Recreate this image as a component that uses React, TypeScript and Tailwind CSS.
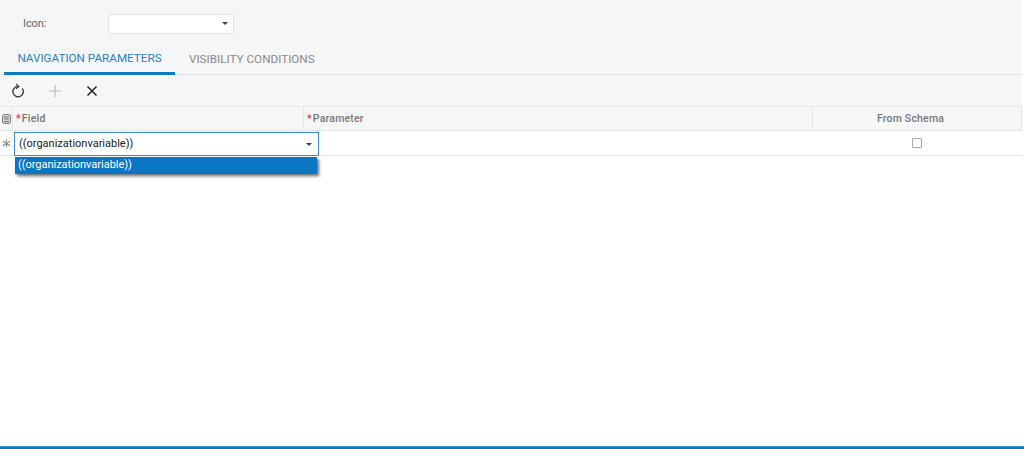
import React from "react";

function Caret() {
  return <span className="w-0 h-0 border-x-[3.5px] border-x-transparent border-t-[3.5px] border-t-[#444]" />;
}

export default function App() {
  return (
    <div className="relative w-[1024px] h-[449px] overflow-hidden bg-white flex flex-col font-['Roboto',sans-serif] text-[11px]">
      <div className="bg-[#f5f6f8] h-[75px] flex flex-col shrink-0 mr-[2px]">
        <div className="flex items-center h-[47px] pl-[23px]">
          <span className="w-[85px] text-[#666] text-[11px] pt-[1px] tracking-[-0.1px]">Icon:</span>
          <div className="w-[126px] h-[20px] bg-white border border-[#e2e3e5] rounded-[1px] flex items-center justify-end pr-[5px]">
            <Caret />
          </div>
        </div>
        <div className="flex items-stretch h-[28px] border-b border-[#dfe0e2] pl-[4px]">
          <div className="w-[171px] h-[28px] border-b-[3px] border-[#0f7ac6] text-[#2c82c4] text-[11.7px] flex justify-center pt-[3px]">NAVIGATION PARAMETERS</div>
          <div className="ml-[14px] text-[#8a8a8a] text-[11.7px] pt-[4px]">VISIBILITY CONDITIONS</div>
        </div>
      </div>
      <div className="bg-[#f5f6f8] h-[31px] flex items-center shrink-0 pl-[11px] mr-[2px]">
        <svg width="14" height="15" viewBox="0 0 14 15" fill="none" stroke="#333" strokeWidth="1.3">
          <path d="M6.8 3.4 A5.2 5.2 0 1 0 11.2 5.4" />
          <path d="M5 1 L7.8 3.4 L5 5.8" strokeWidth="1.2" />
        </svg>
        <svg className="ml-[23px]" width="14" height="14" viewBox="0 0 14 14" fill="none" stroke="#bbb" strokeWidth="1.2">
          <path d="M7 1v12M1 7h12" />
        </svg>
        <svg className="ml-[24px]" width="12" height="12" viewBox="0 0 12 12" fill="none" stroke="#222" strokeWidth="1.5">
          <path d="M1.5 1.5l9 9M10.5 1.5l-9 9" />
        </svg>
      </div>
      <div className="flex h-[25px] shrink-0 bg-[#f5f6f8] border-y border-[#e4e5e7] border-r text-[#777] text-[10.5px] font-medium tracking-[0.2px] mr-[2px]">
        <div className="w-[13px] flex items-center justify-center border-r border-[#e4e5e7]">
          <svg width="9" height="10" viewBox="0 0 9 10" fill="none" stroke="#777" strokeWidth="1">
            <rect x="0.5" y="0.5" width="8" height="9" rx="2" fill="#d8d8d8" />
            <path d="M2 3h5M2 5h5M2 7.5h5" />
          </svg>
        </div>
        <div className="w-[291px] flex items-center pl-[3px] border-r border-[#e4e5e7]"><span className="text-[#e04040] mr-[1px]">*</span>Field</div>
        <div className="w-[509px] flex items-center pl-[3px] border-r border-[#e4e5e7]"><span className="text-[#e04040] mr-[1px]">*</span>Parameter</div>
        <div className="flex-1 flex items-center justify-center pr-[13px]">From Schema</div>
      </div>
      <div className="relative flex h-[25px] shrink-0 border-b border-[#e4e5e7] mr-[2px]">
        <div className="w-[13px] flex items-center justify-center">
          <svg width="9" height="9" viewBox="0 0 9 9" fill="none" stroke="#888" strokeWidth="1.1">
            <path d="M4.5 0.5v8M0.8 2.3l7.4 4.4M8.2 2.3l-7.4 4.4" />
          </svg>
        </div>
        <div className="w-[799px]" />
        <div className="flex-1 flex items-center justify-center pr-[1px]">
          <span className="w-[10px] h-[10px] border border-[#aaa] rounded-[1px] bg-white" />
        </div>
        <div className="absolute left-[14px] top-[1px] w-[305px] h-[24px] bg-white border border-[#3a8fcb] flex items-center justify-between pl-[4px] pr-[6px] text-[#222]">
          <span className="text-[11px]">((organizationvariable))</span>
          <Caret />
        </div>
        <div className="absolute left-[15px] top-[26px] w-[302px] h-[17px] bg-[#0a76c4] text-white leading-[16px] pl-[3px] tracking-[-0.02px] shadow-[2px_2px_3px_rgba(0,0,0,0.6)] z-10">
          ((organizationvariable))
        </div>
      </div>
      <div className="flex-1" />
      <div className="h-[3px] bg-[#0a76c4] shrink-0 border-t border-[#3a9ad8]" />
    </div>
  );
}
